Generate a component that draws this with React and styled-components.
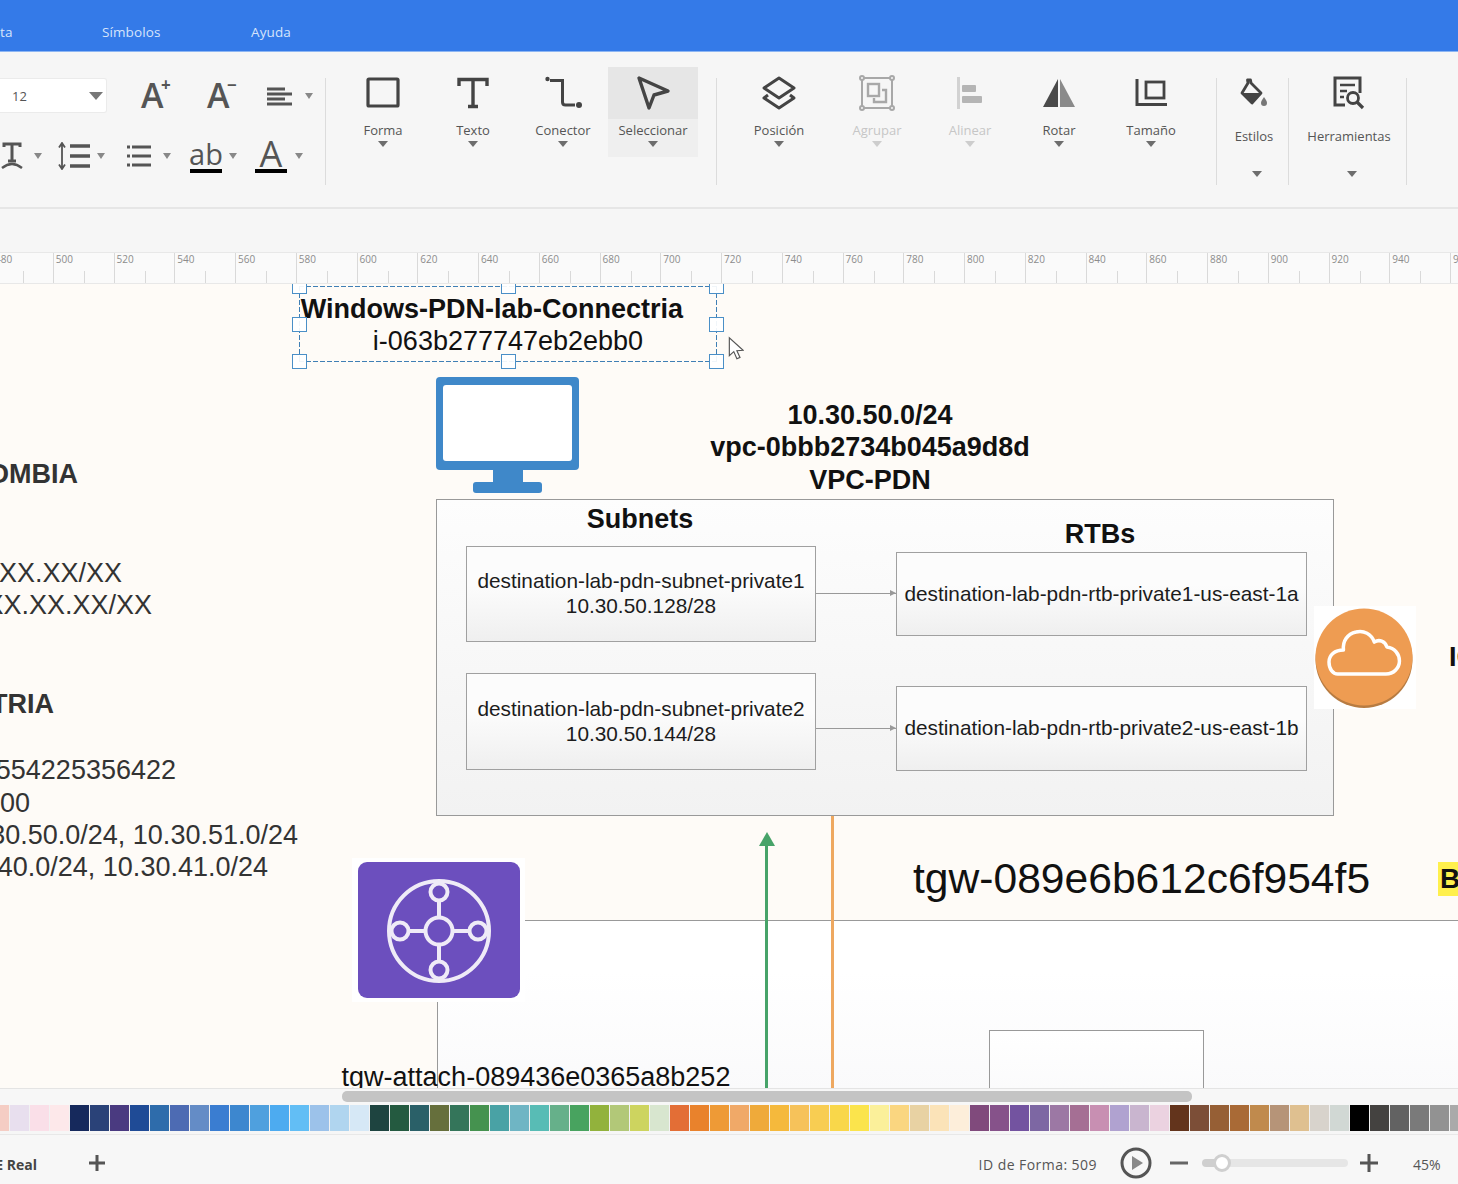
import React from 'react';
import styled, { createGlobalStyle } from 'styled-components';

const GlobalStyle = createGlobalStyle`
  html, body {
    margin: 0;
    padding: 0;
    overflow: hidden;
    background: #f6f6f6;
    font-family: "Open Sans", "Liberation Sans", sans-serif;
  }
`;

const rulerLabels = Array.from({ length: 25 }, (_, i) => 480 + i * 20);

const swatches = [
  '#f5cdc4', '#e8dfee', '#fadfe8', '#fde8ea',
  '#16295c', '#2a4278', '#4a3a80', '#1f4b96', '#2e6cab', '#4d6bb3', '#648cc6', '#3a7dd1', '#3d87cf', '#4fa0de',
  '#4dabf0', '#62bef5', '#9cc2ea', '#b0d5ef', '#d6e8f6',
  '#1e4440', '#245a40', '#2a6068', '#666f3c', '#34755a', '#45924f', '#49a2a5', '#6fb5c4', '#58bcb5', '#66b08a',
  '#48a35f', '#92b23c', '#b2c878', '#cdd45f', '#d8e6cf',
  '#e36e36', '#e9822c', '#ee9a36', '#f0a968', '#efaa3a', '#f5b93c', '#f6c25a', '#f8cd52', '#f9d74a', '#fbe44c',
  '#fbf09a', '#fad680', '#e8d2a3', '#fbe3b8', '#fdeeda',
  '#804a7c', '#86528a', '#7353a0', '#7d67a3', '#9c78a4', '#a56f94', '#c88fb2', '#b0a2d0', '#c9b5cf', '#ebd2e0',
  '#63341c', '#7c4e37', '#965f35', '#a96a36', '#c08a4d', '#b69478', '#dfc090', '#d8d3cc', '#d1d8d4',
  '#000000', '#444240', '#626262', '#7a7a7a', '#929292', '#aaaaaa',
];

const handles = [
  [299, 286], [508, 286], [716, 286],
  [299, 324], [716, 324],
  [299, 361], [508, 361], [716, 361],
];

const App = () => (
  <>
    <GlobalStyle />
    <Page>
      <MenuBar>
        <MenuItem $w={102}>ta</MenuItem>
        <MenuItem $w={149}>Símbolos</MenuItem>
        <MenuItem $w={60}>Ayuda</MenuItem>
      </MenuBar>

      <Toolbar>
        <FormatGroup>
          <FormatRow>
            <FontSize>
              12
              <SelectCaret />
            </FontSize>
            <GrowIcon $left={34}>
              A<GrowSign>+</GrowSign>
            </GrowIcon>
            <GrowIcon $left={36}>
              A<GrowSign>−</GrowSign>
            </GrowIcon>
            <IconSlot $left={30} $w={26}>
              <svg width="26" height="20" viewBox="0 0 26 20" fill="none" stroke="#555" strokeWidth="3">
                <path d="M0 3h18M0 8h25M0 13h18M0 18h25" />
              </svg>
            </IconSlot>
            <Caret $left={12} />
          </FormatRow>
          <FormatRow>
            <IconSlot $left={0} $w={24}>
              <svg width="24" height="28" viewBox="0 0 24 28" fill="none" stroke="#555">
                <path d="M4 5V2h16v3M12 2v17M8 19h8" strokeWidth="3" />
                <path d="M2 26q10-8 20 0" strokeWidth="2.4" />
              </svg>
            </IconSlot>
            <Caret $left={10} />
            <IconSlot $left={16} $w={32}>
              <svg width="32" height="28" viewBox="0 0 32 28" fill="none" stroke="#555">
                <path d="M4 2v24M1 5.5L4 1l3 4.5M1 22.5L4 27l3-4.5" strokeWidth="1.8" />
                <path d="M12 4h20M12 14h20M12 24h20" strokeWidth="3.4" />
              </svg>
            </IconSlot>
            <Caret $left={7} />
            <IconSlot $left={22} $w={24}>
              <svg width="24" height="24" viewBox="0 0 24 24" fill="none" stroke="#555" strokeWidth="3.2">
                <path d="M5 3h19M5 12h19M5 21h19" />
                <path d="M0 3h3M0 12h3M0 21h3" />
              </svg>
            </IconSlot>
            <Caret $left={12} />
            <ColorLetter $left={19} $w={32} $size={29}>ab</ColorLetter>
            <Caret $left={7} />
            <ColorLetter $left={18} $w={32} $size={36}>A</ColorLetter>
            <Caret $left={8} />
          </FormatRow>
        </FormatGroup>
        <Divider />

        <ToolGroup $left={12}>
          <Tool $w={90}>
            <ToolIcon>
              <svg width="36" height="34" viewBox="0 0 36 34" fill="none" stroke="#444" strokeWidth="3.2">
                <rect x="3" y="3" width="30" height="27" rx="1" />
              </svg>
            </ToolIcon>
            <ToolLabel>Forma</ToolLabel>
            <ToolCaret />
          </Tool>
          <Tool $w={90}>
            <ToolIcon>
              <svg width="36" height="34" viewBox="0 0 36 34" fill="none" stroke="#444" strokeWidth="3.4">
                <path d="M4 10V3.5h28V10M18 3.5V30M13 30.5h10" />
              </svg>
            </ToolIcon>
            <ToolLabel>Texto</ToolLabel>
            <ToolCaret />
          </Tool>
          <Tool $w={90}>
            <ToolIcon>
              <svg width="38" height="34" viewBox="0 0 38 34" fill="none" stroke="#444" strokeWidth="3">
                <circle cx="3.5" cy="3" r="2.2" fill="#444" stroke="none" />
                <circle cx="35" cy="29" r="3" fill="#444" stroke="none" />
                <path d="M6 4.5h12.5V26q0 3 3 3H31" />
              </svg>
            </ToolIcon>
            <ToolLabel>Conector</ToolLabel>
            <ToolCaret />
          </Tool>
          <Tool $w={90} $selected>
            <ToolIcon>
              <svg width="36" height="36" viewBox="0 0 36 36" fill="none" stroke="#444" strokeWidth="3.4" strokeLinejoin="round">
                <path d="M4 3l29 13-14 4-5 13z" />
              </svg>
            </ToolIcon>
            <ToolLabel>Seleccionar</ToolLabel>
            <ToolCaret />
          </Tool>
        </ToolGroup>
        <Divider $left={18} />

        <ToolGroup $left={13}>
          <Tool $w={98}>
            <ToolIcon>
              <svg width="34" height="34" viewBox="0 0 34 34" fill="none" stroke="#444" strokeWidth="3" strokeLinejoin="round">
                <path d="M17 2l15 10-15 10L2 12z" />
                <path d="M6 19l-4 3 15 10 15-10-4-3" />
              </svg>
            </ToolIcon>
            <ToolLabel>Posición</ToolLabel>
            <ToolCaret />
          </Tool>
          <Tool $w={98} $disabled>
            <ToolIcon>
              <svg width="36" height="36" viewBox="0 0 36 36" fill="none" stroke="#a8a8a8" strokeWidth="2">
                <rect x="3" y="3" width="30" height="30" />
                <circle cx="3" cy="3" r="2" fill="#f6f6f6" />
                <circle cx="33" cy="3" r="2" fill="#f6f6f6" />
                <circle cx="3" cy="33" r="2" fill="#f6f6f6" />
                <circle cx="33" cy="33" r="2" fill="#f6f6f6" />
                <rect x="9" y="9" width="11" height="12" strokeWidth="2.4" />
                <path d="M23 15h4v12H15v-4" strokeWidth="2.4" />
              </svg>
            </ToolIcon>
            <ToolLabel>Agrupar</ToolLabel>
            <ToolCaret />
          </Tool>
          <Tool $w={88} $disabled>
            <ToolIcon>
              <svg width="30" height="34" viewBox="0 0 30 34" fill="#b5b5b5">
                <rect x="2" y="1" width="3" height="32" fill="#d2d2d2" />
                <rect x="7" y="9" width="14" height="7" rx="1" />
                <rect x="7" y="20" width="20" height="7" rx="1" />
              </svg>
            </ToolIcon>
            <ToolLabel>Alinear</ToolLabel>
            <ToolCaret />
          </Tool>
          <Tool $w={90}>
            <ToolIcon>
              <svg width="34" height="30" viewBox="0 0 34 30" stroke="none">
                <path d="M16 1v28H1z" fill="#4a4a4a" />
                <path d="M18 1v28h15z" fill="#8a8a8a" />
              </svg>
            </ToolIcon>
            <ToolLabel>Rotar</ToolLabel>
            <ToolCaret />
          </Tool>
          <Tool $w={94}>
            <ToolIcon>
              <svg width="34" height="30" viewBox="0 0 34 30" fill="none" stroke="#444">
                <path d="M3 1v25.5h30" strokeWidth="3" />
                <rect x="12" y="4" width="18" height="16" strokeWidth="2.8" />
              </svg>
            </ToolIcon>
            <ToolLabel>Tamaño</ToolLabel>
            <ToolCaret />
          </Tool>
        </ToolGroup>
        <Divider $left={18} />

        <Tool $w={71} $tall>
          <ToolIcon>
            <svg width="30" height="30" viewBox="0 0 30 30" fill="none">
              <path d="M9 5l-.5-3h3L12 5l10 10-9 10L3 15z" stroke="#444" strokeWidth="2.8" strokeLinejoin="round" />
              <path d="M3 15h19l-9 10z" fill="#444" />
              <path d="M25 19c2 3 3 4 3 6a3 3 0 0 1-6 0c0-2 1-3 3-6z" fill="#777" />
            </svg>
          </ToolIcon>
          <ToolLabel>Estilos</ToolLabel>
          <ToolCaret />
        </Tool>
        <Divider />
        <Tool $w={117} $tall>
          <ToolIcon>
            <svg width="34" height="34" viewBox="0 0 34 34" fill="none" stroke="#444">
              <path d="M13 29H3V2h25v15" strokeWidth="3" />
              <path d="M8 9h15M8 15h7M8 21h4" strokeWidth="2.4" />
              <circle cx="21" cy="22" r="5.5" strokeWidth="2.8" />
              <path d="M25 26l6 6" strokeWidth="3.2" />
            </svg>
          </ToolIcon>
          <ToolLabel>Herramientas</ToolLabel>
          <ToolCaret />
        </Tool>
        <Divider />
      </Toolbar>

      <Spacer />

      <Ruler>
        {rulerLabels.map(n => (
          <RulerCell key={n}>{n}</RulerCell>
        ))}
      </Ruler>

      <Canvas>
        <LargeFrame />
        <InnerFrame />
        <HLine />
        <VLine />
        <OrangeLine />
        <GreenArrow>
          <svg width="16" height="14" viewBox="0 0 16 14" fill="#47a369">
            <path d="M8 0l8 14H0z" />
          </svg>
        </GreenArrow>

        <DiagramText $x={292} $y={9} $w={400} $lh={32} $size={27}>
          <strong>Windows-PDN-lab-Connectria</strong>
        </DiagramText>
        <DiagramText $x={308} $y={41} $w={400} $lh={32} $size={27}>
          i-063b277747eb2ebb0
        </DiagramText>

        <SelectionBox />
        {handles.map(([x, y]) => (
          <Handle key={`${x}-${y}`} $x={x} $y={y} />
        ))}
        <Cursor>
          <svg width="16" height="25" viewBox="0 0 18 26" fill="#fff" stroke="#555" strokeWidth="1.3">
            <path d="M1.5 1v20l5-4.5 3.5 8 3.5-1.5-3.5-7.5 7-.5z" />
          </svg>
        </Cursor>

        <Monitor>
          <svg width="143" height="116" viewBox="0 0 143 116">
            <rect width="143" height="93" rx="4" fill="#3f88c9" />
            <rect x="7" y="8" width="129" height="76" rx="3" fill="#fff" />
            <rect x="57" y="93" width="30" height="12" fill="#3f88c9" />
            <rect x="37" y="105" width="69" height="11" rx="3" fill="#3f88c9" />
          </svg>
        </Monitor>

        <DiagramText $x={670} $y={114.5} $w={400} $lh={32.5} $size={27}>
          <strong>
            10.30.50.0/24
            <br />
            vpc-0bbb2734b045a9d8d
            <br />
            VPC-PDN
          </strong>
        </DiagramText>

        <VpcBox />
        <DiagramText $x={540} $y={219} $w={200} $lh={32} $size={27}>
          <strong>Subnets</strong>
        </DiagramText>
        <DiagramText $x={1000} $y={234} $w={200} $lh={32} $size={27}>
          <strong>RTBs</strong>
        </DiagramText>

        <NetBox $x={466} $y={262} $w={350} $h={96}>
          destination-lab-pdn-subnet-private1
          <br />
          10.30.50.128/28
        </NetBox>
        <NetBox $x={466} $y={389} $w={350} $h={97}>
          destination-lab-pdn-subnet-private2
          <br />
          10.30.50.144/28
        </NetBox>
        <NetBox $x={896} $y={268} $w={411} $h={84}>
          destination-lab-pdn-rtb-private1-us-east-1a
        </NetBox>
        <NetBox $x={896} $y={402} $w={411} $h={85}>
          destination-lab-pdn-rtb-private2-us-east-1b
        </NetBox>

        <Link $y={309} />
        <Link $y={444} />

        <CloudBadge>
          <svg width="102" height="103" viewBox="0 0 102 103">
            <circle cx="50" cy="53.5" r="48.5" fill="#b87c42" />
            <circle cx="50" cy="51" r="48.5" fill="#ee9c52" />
            <path
              transform="translate(15 25) scale(.965 1) translate(-16 -24)"
              d="M25 67h50c8 0 14-6 14-13 0-7-5-13-13-14-2-6-8-8-13-5-3-8-11-12-19-10-9 2-14 9-13 18-9 0-15 5-15 12s4 12 9 12z"
              fill="none"
              stroke="#fff"
              strokeWidth="3.6"
              strokeLinejoin="round"
            />
          </svg>
        </CloudBadge>

        <EdgeText $x={1449} $y={357}>IGW</EdgeText>
        <Highlight>B</Highlight>

        <GatewayName>tgw-089e6b612c6f954f5</GatewayName>

        <GatewayIcon>
          <svg width="162" height="136" viewBox="0 0 162 136" fill="none" stroke="#efebf7" strokeWidth="4">
            <rect width="162" height="136" rx="9" fill="#6c4fbe" stroke="none" />
            <circle cx="81" cy="69" r="50" />
            <circle cx="81" cy="69" r="13.5" />
            <circle cx="81" cy="30" r="8.5" />
            <circle cx="81" cy="108" r="8.5" />
            <circle cx="42" cy="69" r="8.5" />
            <circle cx="120" cy="69" r="8.5" />
            <path d="M81 39v16.5M81 82.5V99M51 69h16.5M94.5 69H111" />
          </svg>
        </GatewayIcon>

        <DiagramText $x={336} $y={777} $w={400} $lh={32} $size={27}>
          tgw-attach-089436e0365a8b252
        </DiagramText>

        <ClippedLine $end={78} $y={174} $bold>COLOMBIA</ClippedLine>
        <ClippedLine $end={122} $y={273}>XX.XX.XX/XX</ClippedLine>
        <ClippedLine $end={152} $y={305}>XX.XX.XX/XX</ClippedLine>
        <ClippedLine $end={54} $y={404} $bold>CONNECTRIA</ClippedLine>
        <ClippedLine $end={176} $y={470}>554225356422</ClippedLine>
        <ClippedLine $end={30} $y={503}>00</ClippedLine>
        <ClippedLine $end={298} $y={535}>10.30.50.0/24, 10.30.51.0/24</ClippedLine>
        <ClippedLine $end={268} $y={567}>10.30.40.0/24, 10.30.41.0/24</ClippedLine>
      </Canvas>

      <ScrollTrack>
        <ScrollThumb />
      </ScrollTrack>

      <Palette>
        {swatches.map((color, i) => (
          <Swatch key={i} $color={color} />
        ))}
      </Palette>

      <StatusBar>
        <PageTab>E Real</PageTab>
        <StatusGlyph $left={50}>
          <svg width="20" height="20" viewBox="0 0 20 20" stroke="#555" strokeWidth="3">
            <path d="M10 2v16M2 10h16" />
          </svg>
        </StatusGlyph>
        <ShapeId>ID de Forma: 509</ShapeId>
        <StatusGlyph $left={23}>
          <svg width="32" height="32" viewBox="0 0 32 32" fill="none" stroke="#555" strokeWidth="3">
            <circle cx="16" cy="16" r="14" />
            <path d="M12 9l11 7-11 7z" fill="#888" stroke="none" />
          </svg>
        </StatusGlyph>
        <StatusGlyph $left={18}>
          <svg width="18" height="18" viewBox="0 0 18 18" stroke="#666" strokeWidth="3">
            <path d="M0 9h18" />
          </svg>
        </StatusGlyph>
        <ZoomTrack>
          <ZoomKnob />
        </ZoomTrack>
        <StatusGlyph $left={12}>
          <svg width="18" height="20" viewBox="0 0 18 20" stroke="#555" strokeWidth="3">
            <path d="M9 1v18M0 10h18" />
          </svg>
        </StatusGlyph>
        <ZoomValue>45%</ZoomValue>
      </StatusBar>
    </Page>
  </>
);

const Page = styled.div`
  width: 1458px;
  height: 1184px;
  display: flex;
  flex-direction: column;
  overflow: hidden;
  background: #f6f6f6;
`;

const MenuBar = styled.div`
  height: 52px;
  flex: none;
  box-sizing: border-box;
  display: flex;
  align-items: flex-end;
  padding-bottom: 10px;
  background: #347ae8;
  border-bottom: 1px solid #8db6f3;
`;

const MenuItem = styled.div`
  width: ${p => p.$w}px;
  font-size: 13.5px;
  letter-spacing: 0.1px;
  line-height: 18px;
  color: #d6e4fb;
`;

const Toolbar = styled.div`
  height: 157px;
  flex: none;
  box-sizing: border-box;
  display: flex;
  align-items: flex-start;
  padding-top: 15px;
  background: #f6f6f6;
  border-bottom: 2px solid #e6e6e6;
`;

const FormatGroup = styled.div`
  width: 325px;
  flex: none;
  display: flex;
  flex-direction: column;
  gap: 25px;
  padding-top: 11px;
`;

const FormatRow = styled.div`
  height: 35px;
  display: flex;
  align-items: center;
`;

const FontSize = styled.div`
  width: 107px;
  height: 35px;
  flex: none;
  box-sizing: border-box;
  display: flex;
  align-items: center;
  justify-content: space-between;
  padding: 0 3px 0 12px;
  background: #fff;
  border: 1px solid #ebebeb;
  border-left: 0;
  border-radius: 0 3px 3px 0;
  font-size: 13px;
  color: #555;
`;

const SelectCaret = styled.span`
  width: 0;
  height: 0;
  border-left: 7px solid transparent;
  border-right: 7px solid transparent;
  border-top: 8px solid #777;
`;

const GrowIcon = styled.div`
  width: 30px;
  margin-left: ${p => p.$left}px;
  position: relative;
  font-size: 34px;
  font-weight: 600;
  line-height: 35px;
  color: #555;
`;

const GrowSign = styled.span`
  position: absolute;
  top: -2px;
  left: 20px;
  font-size: 17px;
  font-weight: 700;
  line-height: 18px;
`;

const IconSlot = styled.div`
  width: ${p => p.$w}px;
  flex: none;
  margin-left: ${p => p.$left}px;
  display: flex;
  justify-content: center;
`;

const Caret = styled.span`
  width: 0;
  height: 0;
  flex: none;
  margin-left: ${p => p.$left}px;
  border-left: 4.5px solid transparent;
  border-right: 4.5px solid transparent;
  border-top: 6px solid #888;
`;

const ColorLetter = styled.div`
  width: ${p => p.$w}px;
  height: 35px;
  flex: none;
  box-sizing: border-box;
  margin-left: ${p => p.$left}px;
  display: flex;
  align-items: flex-end;
  justify-content: center;
  border-bottom: 4px solid #000;
  font-size: ${p => p.$size}px;
  line-height: 30px;
  color: #555;
`;

const Divider = styled.div`
  width: 1px;
  height: 107px;
  flex: none;
  margin-top: 11px;
  margin-left: ${p => p.$left || 0}px;
  background: #dcdcdc;
`;

const ToolGroup = styled.div`
  display: flex;
  flex: none;
  margin-left: ${p => p.$left}px;
`;

const Tool = styled.div`
  width: ${p => p.$w}px;
  height: 90px;
  flex: none;
  box-sizing: border-box;
  display: flex;
  flex-direction: column;
  align-items: center;
  background: ${p => (p.$selected ? '#efefef' : 'transparent')};
  color: ${p => (p.$disabled ? '#c6c6c6' : '#555')};
  ${p => p.$selected && '> div:first-child { background: #e6e6e6; }'}
  ${p =>
    p.$tall &&
    'height: 116px; padding-left: 3px; > span:last-child { margin-top: 24px; margin-left: 6px; } > div:nth-child(2) { margin-top: 6px; }'}
`;

const ToolIcon = styled.div`
  width: 100%;
  height: 52px;
  flex: none;
  display: flex;
  align-items: center;
  justify-content: center;
`;

const ToolLabel = styled.div`
  font-size: 13px;
  line-height: 22px;
  white-space: nowrap;
`;

const ToolCaret = styled.span`
  width: 0;
  height: 0;
  margin-top: 0;
  border-left: 5px solid transparent;
  border-right: 5px solid transparent;
  border-top: 6px solid currentColor;
  opacity: 0.85;
`;

const Spacer = styled.div`
  height: 43px;
  flex: none;
`;

const Ruler = styled.div`
  height: 32px;
  flex: none;
  box-sizing: border-box;
  display: flex;
  margin-left: -8px;
  background: #fafafa;
  border-top: 1px solid #e8e8e8;
  border-bottom: 1px solid #e8e8e8;
`;

const RulerCell = styled.div`
  width: 60.75px;
  flex: none;
  box-sizing: border-box;
  position: relative;
  padding: 0 0 0 2px;
  border-left: 1px solid #d9d9d9;
  font-size: 10px;
  line-height: 13px;
  color: #8c8c8c;
  &::after {
    content: '';
    position: absolute;
    left: 30px;
    bottom: 0;
    height: 12px;
    border-left: 1px solid #d9d9d9;
  }
`;

const Canvas = styled.div`
  height: 804px;
  flex: none;
  position: relative;
  overflow: hidden;
  background: #fefbf7;
  font-family: "Liberation Sans", Arial, sans-serif;
  color: #111;
`;

const LargeFrame = styled.div`
  position: absolute;
  left: 437px;
  top: 636px;
  width: 1100px;
  height: 170px;
  background: linear-gradient(#ffffff 30%, #fafafb);
  border: 1px solid #999;
`;

const InnerFrame = styled.div`
  position: absolute;
  left: 989px;
  top: 746px;
  width: 213px;
  height: 100px;
  background: linear-gradient(#ffffff, #f8f8f9);
  border: 1px solid #999;
`;

const HLine = styled.div`
  position: absolute;
  left: 524px;
  right: 0;
  top: 636px;
  height: 1px;
  background: #999;
`;

const VLine = styled.div`
  position: absolute;
  left: 437px;
  top: 712px;
  height: 92px;
  width: 1px;
  background: #999;
`;

const OrangeLine = styled.div`
  position: absolute;
  left: 831px;
  top: 532px;
  bottom: 0;
  width: 3px;
  background: #eea860;
`;

const GreenArrow = styled.div`
  position: absolute;
  left: 765px;
  top: 560px;
  bottom: 0;
  width: 3px;
  background: #47a369;
  svg {
    position: absolute;
    left: -6.5px;
    top: -12px;
  }
`;

const DiagramText = styled.div`
  position: absolute;
  left: ${p => p.$x}px;
  top: ${p => p.$y}px;
  width: ${p => p.$w}px;
  font-size: ${p => p.$size}px;
  line-height: ${p => p.$lh}px;
  text-align: center;
  white-space: nowrap;
`;

const SelectionBox = styled.div`
  position: absolute;
  left: 299px;
  top: 2px;
  width: 418px;
  height: 76px;
  background:
    linear-gradient(to right, #3f7fb5 5px, transparent 5px) top left / 7px 1px repeat-x,
    linear-gradient(to right, #3f7fb5 5px, transparent 5px) bottom left / 7px 1px repeat-x,
    linear-gradient(to bottom, #3f7fb5 5px, transparent 5px) top left / 1px 7px repeat-y,
    linear-gradient(to bottom, #3f7fb5 5px, transparent 5px) top right / 1px 7px repeat-y;
`;

const Handle = styled.div`
  position: absolute;
  left: ${p => p.$x - 7}px;
  top: ${p => p.$y - 291}px;
  width: 15px;
  height: 15px;
  box-sizing: border-box;
  background: rgba(255, 255, 255, 0.92);
  border: 1.5px solid #4a8fc7;
`;

const Cursor = styled.div`
  position: absolute;
  left: 728px;
  top: 52px;
`;

const Monitor = styled.div`
  position: absolute;
  left: 436px;
  top: 93px;
  svg {
    display: block;
  }
`;

const VpcBox = styled.div`
  position: absolute;
  left: 436px;
  top: 215px;
  width: 898px;
  height: 317px;
  box-sizing: border-box;
  background: linear-gradient(#fdfdfd, #f2f2f2);
  border: 1.5px solid #999;
`;

const NetBox = styled.div`
  position: absolute;
  left: ${p => p.$x}px;
  top: ${p => p.$y}px;
  width: ${p => p.$w}px;
  height: ${p => p.$h}px;
  box-sizing: border-box;
  padding-bottom: 2px;
  display: flex;
  align-items: center;
  justify-content: center;
  text-align: center;
  white-space: nowrap;
  font-size: 20.8px;
  line-height: 25px;
  color: #1c1c1c;
  background: linear-gradient(#fcfcfc 40%, #efefef);
  border: 1.5px solid #a0a0a0;
`;

const Link = styled.div`
  position: absolute;
  left: 816px;
  top: ${p => p.$y}px;
  width: 80px;
  height: 1px;
  background: #999;
  &::after {
    content: '';
    position: absolute;
    right: 0;
    top: -3px;
    border-left: 6px solid #999;
    border-top: 3.5px solid transparent;
    border-bottom: 3.5px solid transparent;
  }
`;

const CloudBadge = styled.div`
  position: absolute;
  left: 1314px;
  top: 322px;
  width: 102px;
  height: 103px;
  background: #fff;
  svg {
    display: block;
  }
`;

const EdgeText = styled.div`
  position: absolute;
  left: ${p => p.$x}px;
  top: ${p => p.$y}px;
  font-size: 27px;
  font-weight: 700;
  line-height: 32px;
  white-space: nowrap;
`;

const Highlight = styled.div`
  position: absolute;
  left: 1438px;
  top: 578px;
  width: 40px;
  height: 34px;
  padding-left: 2px;
  box-sizing: border-box;
  background: #fff04d;
  font-size: 28px;
  font-weight: 700;
  line-height: 34px;
`;

const GatewayName = styled.div`
  position: absolute;
  left: 913px;
  top: 568px;
  font-size: 42.6px;
  line-height: 52px;
  white-space: nowrap;
`;

const GatewayIcon = styled.div`
  position: absolute;
  left: 352px;
  top: 574px;
  padding: 4px 5px 4px 6px;
  background: #fff;
  svg {
    display: block;
  }
`;

const ClippedLine = styled.div`
  position: absolute;
  right: calc(100% - ${p => p.$end}px);
  top: ${p => p.$y}px;
  font-size: 27px;
  font-weight: ${p => (p.$bold ? 700 : 400)};
  line-height: 32px;
  white-space: nowrap;
  color: #333;
`;

const ScrollTrack = styled.div`
  height: 17px;
  flex: none;
  box-sizing: border-box;
  padding: 2px 0 2px 342px;
  background: #f7f7f7;
  border-top: 1px solid #e4e4e4;
`;

const ScrollThumb = styled.div`
  width: 850px;
  height: 11px;
  border-radius: 5px;
  background: #c4c4c4;
`;

const Palette = styled.div`
  height: 26px;
  flex: none;
  display: flex;
  margin-left: -10px;
`;

const Swatch = styled.div`
  width: 20px;
  flex: none;
  box-sizing: border-box;
  background: ${p => p.$color};
  border-right: 1px solid #f2f2f2;
`;

const StatusBar = styled.div`
  flex: 1;
  box-sizing: border-box;
  margin-top: 3px;
  display: flex;
  align-items: center;
  padding-top: 6px;
  background: #f7f7f7;
  border-top: 1px solid #e8e8e8;
`;

const PageTab = styled.div`
  width: 37px;
  flex: none;
  display: flex;
  justify-content: flex-end;
  white-space: pre;
  padding-top: 3px;
  font-size: 14px;
  font-weight: 700;
  color: #444;
`;

const StatusGlyph = styled.div`
  flex: none;
  margin-left: ${p => p.$left}px;
  display: flex;
  svg {
    display: block;
  }
`;

const ShapeId = styled.div`
  flex: none;
  margin-left: auto;
  padding-top: 3px;
  font-size: 14px;
  letter-spacing: 0.45px;
  color: #555;
`;

const ZoomTrack = styled.div`
  width: 146px;
  height: 8px;
  flex: none;
  position: relative;
  margin-left: 14px;
  border-radius: 4px;
  background: linear-gradient(to right, #cfcfcf 20px, #e6e6e6 20px);
`;

const ZoomKnob = styled.div`
  position: absolute;
  left: 11px;
  top: -5px;
  width: 18px;
  height: 18px;
  box-sizing: border-box;
  border-radius: 50%;
  background: #fff;
  border: 3px solid #cfcfcf;
`;

const ZoomValue = styled.div`
  flex: none;
  width: 27px;
  margin-left: 35px;
  margin-right: 18px;
  padding-top: 3px;
  font-size: 14px;
  white-space: nowrap;
  color: #555;
`;

export default App;
